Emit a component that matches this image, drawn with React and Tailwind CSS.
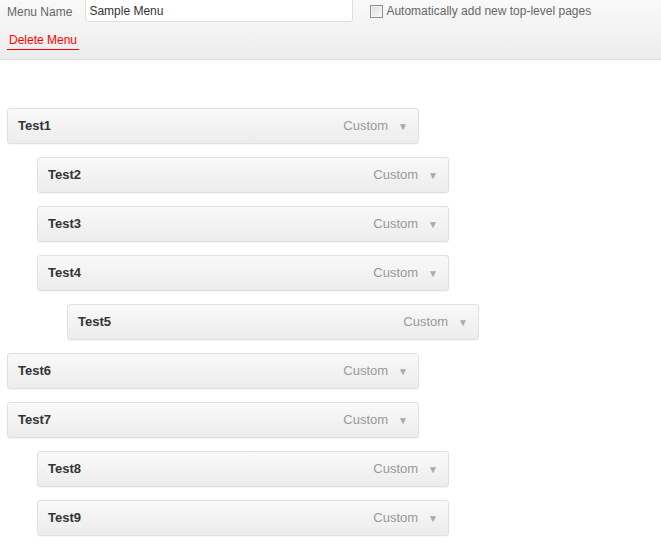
import React from 'react';

const items = [
  { name: 'Test1', depth: 0 },
  { name: 'Test2', depth: 1 },
  { name: 'Test3', depth: 1 },
  { name: 'Test4', depth: 1 },
  { name: 'Test5', depth: 2 },
  { name: 'Test6', depth: 0 },
  { name: 'Test7', depth: 0 },
  { name: 'Test8', depth: 1 },
  { name: 'Test9', depth: 1 },
];

const indent = ['ml-[7px]', 'ml-[37px]', 'ml-[67px]'];

function MenuItem({ name, depth }) {
  return (
    <div
      className={`${indent[depth]} w-[412px] h-[36px] flex items-center justify-between pl-[10px] pr-[10px] border border-[#dfdfdf] rounded-[3px] bg-gradient-to-b from-[#f9f9f9] to-[#ececec] shadow-[0_1px_0_rgba(0,0,0,0.04)]`}
    >
      <span className="font-bold text-[13px] text-[#333]">{name}</span>
      <span className="flex items-center gap-[10px] text-[13px] text-[#999]">
        Custom
        <span className="text-[10px] text-[#aaa]">▼</span>
      </span>
    </div>
  );
}

export default function App() {
  return (
    <div className="w-[661px] h-[548px] overflow-hidden bg-white font-['Liberation_Sans',Arial,sans-serif]">
      <div className="h-[60px] border-b border-[#dfdfdf] bg-gradient-to-b from-[#f9f9f9] to-[#ececec]">
        <div className="flex items-start h-[22px]">
          <span className="ml-[7px] mt-[3px] text-[12px] text-[#666]">Menu Name</span>
          <input
            readOnly
            value="Sample Menu"
            className="ml-[13px] -mt-[3px] w-[268px] h-[25px] px-[3px] pt-[2px] bg-white border border-[#dfdfdf] rounded-[3px] text-[12px] text-[#333] outline-none"
          />
          <label className="ml-[17px] mt-[2px] flex items-center gap-[3px] text-[12px] text-[#666]">
            <span className="w-[13px] h-[13px] border border-[#8f8f8f] bg-gradient-to-br from-[#dcdcdc] to-[#fafafa] shadow-[inset_0_0_0_1px_#f4f4f4]" />
            <span>Automatically add new top-level pages</span>
          </label>
        </div>
        <div className="mt-[11px] ml-[7px] flex">
          <span className="block px-[2px] pb-[1px] text-[12px] text-[#f00] border-b border-[#f00] leading-[15px]">
            Delete Menu
          </span>
        </div>
      </div>
      <div className="pt-[48px] flex flex-col gap-[13px]">
        {items.map((it) => (
          <MenuItem key={it.name} {...it} />
        ))}
      </div>
    </div>
  );
}
